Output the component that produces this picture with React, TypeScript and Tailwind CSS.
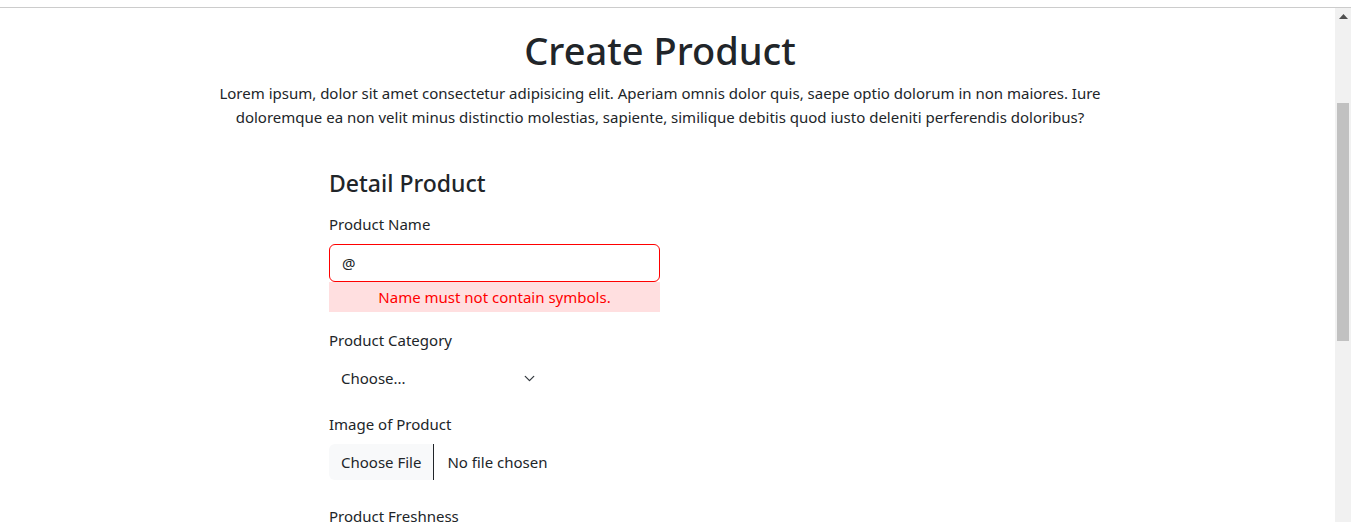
import { ChevronDown } from "lucide-react";

const font = { fontFamily: '"Noto Sans", "Open Sans", sans-serif' };

function Label({ children }: { children: React.ReactNode }) {
  return <label className="block h-6 leading-6 text-[15px] text-[#212529]">{children}</label>;
}

function Scrollbar() {
  return (
    <div className="w-[16px] shrink-0 bg-[#f1f1f1] flex flex-col items-center">
      <svg width="9" height="6" viewBox="0 0 9 6" className="mt-[6px]">
        <path d="M4.5 0 L9 5 L0 5 Z" fill="#505050" />
      </svg>
      <div className="mt-[83px] w-[12px] h-[238px] bg-[#c1c1c1]" />
    </div>
  );
}

export default function App() {
  return (
    <div className="h-[522px] overflow-hidden bg-white flex flex-col" style={font}>
      <div className="h-[8px] shrink-0 border-b border-[#cccccc]" />
      <div className="flex flex-1 min-h-0">
        <main className="flex-1 min-w-0 text-[#212529]">
          <div className="w-[1320px] text-center">
            <h1 className="mt-[18px] text-[38px] leading-[48px] font-medium">Create Product</h1>
            <p className="mt-[7px] text-[15px] leading-6">
              Lorem ipsum, dolor sit amet consectetur adipisicing elit. Aperiam omnis dolor quis, saepe optio dolorum in non maiores. Iure
              <br />
              doloremque ea non velit minus distinctio molestias, sapiente, similique debitis quod iusto deleniti perferendis doloribus?
            </p>
          </div>

          <form className="ml-[329px] w-[331px] mt-[40px]">
            <h4 className="text-[23px] leading-[29px] font-medium">Detail Product</h4>
            <div className="mt-[14px]">
              <Label>Product Name</Label>
              <input
                readOnly
                value="@"
                className="mt-[8px] block w-full h-[38px] px-3 text-[15px] rounded-[6px] border border-[#ff0000] outline-none"
                style={font}
              />
              <div className="h-[30px] bg-[#ffdfe0] text-[#ff0000] text-[15px] leading-[30px] text-center">
                Name must not contain symbols.
              </div>
            </div>
            <div className="mt-[16px]">
              <Label>Product Category</Label>
              <div className="mt-[7px] w-[212px] h-[38px] flex items-center justify-between pl-3 pr-[3px] text-[15px]">
                <span>Choose...</span>
                <ChevronDown size={17} strokeWidth={1.8} className="text-[#343a40]" />
              </div>
            </div>
            <div className="mt-[15px]">
              <Label>Image of Product</Label>
              <div className="mt-[8px] flex h-[36px] items-stretch text-[15px]">
                <span className="px-3 flex items-center bg-[#f8f9fa] rounded-l-[6px] border-r border-[#212529]">
                  Choose File
                </span>
                <span className="pl-[13px] flex items-center">No file chosen</span>
              </div>
            </div>
            <div className="mt-[24px]">
              <Label>Product Freshness</Label>
            </div>
          </form>
        </main>
        <Scrollbar />
      </div>
    </div>
  );
}
